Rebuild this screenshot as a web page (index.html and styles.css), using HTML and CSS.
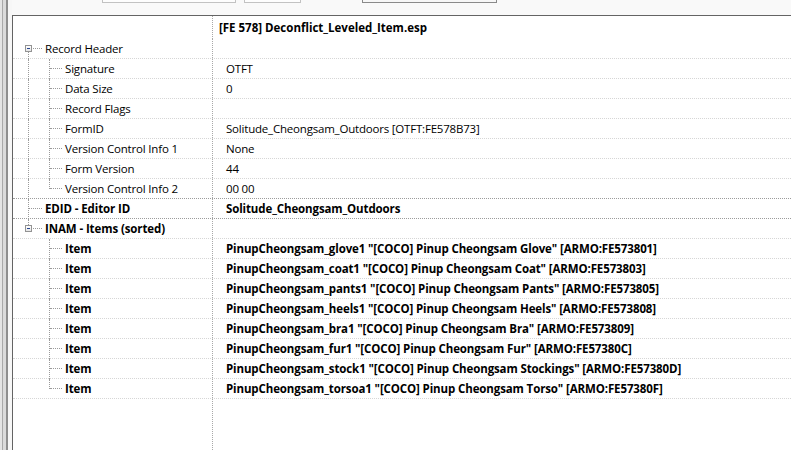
FILE: index.html
```html
<!DOCTYPE html>
<html lang="en">
<head>
<meta charset="utf-8">
<title>Record view</title>
<link rel="stylesheet" href="styles.css">
</head>
<body>
<div class="app">
  <div class="edge"><span class="e1"></span><span class="e2"></span><span class="e3"></span><span class="e4"></span><span class="e5"></span></div>
  <div class="content">
    <div class="toolbar">
      <div class="tb tb1"></div>
      <div class="tb tb2"></div>
      <div class="tb tb3"></div>
    </div>
    <div class="panel">
      <div class="row head"><div class="name"></div><div class="value bold hv">[FE 578] Deconflict_Leveled_Item.esp</div></div>

      <div class="row"><div class="name top first"><span class="box"></span><span class="hdot"></span><span class="vdown"></span>Record Header</div><div class="value"></div></div>
      <div class="row"><div class="name child trunk"><span class="vfull"></span><span class="cline"></span><span class="chdot"></span>Signature</div><div class="value">OTFT</div></div>
      <div class="row"><div class="name child trunk"><span class="vfull"></span><span class="cline"></span><span class="chdot"></span>Data Size</div><div class="value">0</div></div>
      <div class="row"><div class="name child trunk"><span class="vfull"></span><span class="cline"></span><span class="chdot"></span>Record Flags</div><div class="value"></div></div>
      <div class="row"><div class="name child trunk"><span class="vfull"></span><span class="cline"></span><span class="chdot"></span>FormID</div><div class="value">Solitude_Cheongsam_Outdoors [OTFT:FE578B73]</div></div>
      <div class="row"><div class="name child trunk"><span class="vfull"></span><span class="cline"></span><span class="chdot"></span>Version Control Info 1</div><div class="value">None</div></div>
      <div class="row"><div class="name child trunk"><span class="vfull"></span><span class="cline"></span><span class="chdot"></span>Form Version</div><div class="value">44</div></div>
      <div class="row dark"><div class="name child trunk"><span class="vfull"></span><span class="cline last"></span><span class="chdot"></span>Version Control Info 2</div><div class="value">00 00</div></div>

      <div class="row dark"><div class="name top bold"><span class="vfull"></span><span class="leaf"></span>EDID - Editor ID</div><div class="value bold">Solitude_Cheongsam_Outdoors</div></div>
      <div class="row"><div class="name top bold"><span class="vup"></span><span class="box"></span><span class="hdot"></span>INAM - Items (sorted)</div><div class="value"></div></div>

      <div class="row"><div class="name child bold"><span class="cline"></span><span class="chdot"></span>Item</div><div class="value bold">PinupCheongsam_glove1 "[COCO] Pinup Cheongsam Glove" [ARMO:FE573801]</div></div>
      <div class="row"><div class="name child bold"><span class="cline"></span><span class="chdot"></span>Item</div><div class="value bold">PinupCheongsam_coat1 "[COCO] Pinup Cheongsam Coat" [ARMO:FE573803]</div></div>
      <div class="row"><div class="name child bold"><span class="cline"></span><span class="chdot"></span>Item</div><div class="value bold">PinupCheongsam_pants1 "[COCO] Pinup Cheongsam Pants" [ARMO:FE573805]</div></div>
      <div class="row"><div class="name child bold"><span class="cline"></span><span class="chdot"></span>Item</div><div class="value bold">PinupCheongsam_heels1 "[COCO] Pinup Cheongsam Heels" [ARMO:FE573808]</div></div>
      <div class="row"><div class="name child bold"><span class="cline"></span><span class="chdot"></span>Item</div><div class="value bold">PinupCheongsam_bra1 "[COCO] Pinup Cheongsam Bra" [ARMO:FE573809]</div></div>
      <div class="row"><div class="name child bold"><span class="cline"></span><span class="chdot"></span>Item</div><div class="value bold">PinupCheongsam_fur1 "[COCO] Pinup Cheongsam Fur" [ARMO:FE57380C]</div></div>
      <div class="row"><div class="name child bold"><span class="cline"></span><span class="chdot"></span>Item</div><div class="value bold">PinupCheongsam_stock1 "[COCO] Pinup Cheongsam Stockings" [ARMO:FE57380D]</div></div>
      <div class="row"><div class="name child bold"><span class="cline last"></span><span class="chdot"></span>Item</div><div class="value bold">PinupCheongsam_torsoa1 "[COCO] Pinup Cheongsam Torso" [ARMO:FE57380F]</div></div>

      <div class="filler"><div class="name"></div></div>
    </div>
  </div>
</div>
</body>
</html>
```

FILE: styles.css
```css
html, body {
  margin: 0;
  padding: 0;
}
body {
  background: #f9f9f9;
  font-family: "Open Sans", "Segoe UI", "Liberation Sans", sans-serif;
  font-size: 11.5px;
  color: #000;
  overflow: hidden;
}
.app {
  display: flex;
  width: 791px;
  height: 450px;
}
.edge {
  display: flex;
  width: 12px;
  flex: none;
}
.edge span { display: block; height: 100%; }
.e1 { width: 2px; background: #e4e4e4; }
.e2 { width: 1px; background: #a9a9a9; }
.e3 { width: 3px; background: #dbdbdb; }
.e4 { width: 2px; background: #8e8e8e; }
.e5 { width: 4px; background: #f7f7f7; }

.content {
  flex: 1;
  display: flex;
  flex-direction: column;
  min-width: 0;
}
.toolbar {
  height: 15px;
  flex: none;
  display: flex;
  align-items: flex-start;
  padding-left: 90px;
}
.tb {
  height: 2px;
  border: 1px solid #c2c2c2;
  border-top: none;
  background: #fdfdfd;
}
.tb1 { width: 132px; }
.tb2 { width: 55px; margin-left: 8px; }
.tb3 { width: 133px; margin-left: 61px; border-color: #8a8a8a; background: #f7f7f7; }

.panel {
  flex: 1;
  display: flex;
  flex-direction: column;
  background: #fff;
  border-top: 1px solid #646464;
  border-left: 1px solid #646464;
  min-height: 0;
}
.row {
  display: flex;
  height: 20px;
  box-sizing: border-box;
  border-bottom: 1px dotted #d6d6d6;
  flex: none;
}
.row.dark { border-bottom-color: #9c9c9c; }
.row.head {
  height: 23px;
  border-bottom: none;
}
.name {
  width: 200px;
  flex: none;
  box-sizing: border-box;
  border-right: 1px dotted #a8a8a8;
  position: relative;
  padding-left: 32px;
  line-height: 19px;
  white-space: nowrap;
  letter-spacing: -0.18px;
}
.name.child { padding-left: 52px; }
.value {
  padding-left: 13px;
  line-height: 19px;
  white-space: nowrap;
  letter-spacing: -0.2px;
}
.head .name, .head .value { line-height: 23px; }
.bold { font-weight: 700; }
.value.bold { letter-spacing: -0.12px; }
.value.hv { padding-left: 6px; letter-spacing: 0; }
.name.bold { letter-spacing: -0.1px; }

/* tree connectors */
.name span { position: absolute; display: block; }
.box {
  left: 12px;
  top: 6px;
  width: 5px;
  height: 5px;
  border: 1px solid #939393;
  background: linear-gradient(#ffffff, #e6e6e6);
}
.box::after {
  content: "";
  position: absolute;
  left: 1px;
  top: 2px;
  width: 3px;
  height: 1px;
  background: #27458f;
}
.hdot {
  left: 20px;
  top: 9px;
  width: 9px;
  border-top: 1px dotted #9a9a9a;
}
.leaf {
  left: 16px;
  top: 9px;
  width: 13px;
  border-top: 1px dotted #9a9a9a;
}
.vdown {
  left: 15px;
  top: 13px;
  bottom: -1px;
  border-left: 1px dotted #9a9a9a;
}
.vup {
  left: 15px;
  top: 0;
  height: 6px;
  border-left: 1px dotted #9a9a9a;
}
.vfull {
  left: 15px;
  top: 0;
  bottom: -1px;
  border-left: 1px dotted #9a9a9a;
}
.cline {
  left: 36px;
  top: 0;
  bottom: -1px;
  border-left: 1px dotted #9a9a9a;
}
.cline.last { bottom: auto; height: 10px; }
.chdot {
  left: 37px;
  top: 9px;
  width: 12px;
  border-top: 1px dotted #9a9a9a;
}
.filler {
  flex: 1;
  display: flex;
}
.filler .name { height: 100%; }
```
